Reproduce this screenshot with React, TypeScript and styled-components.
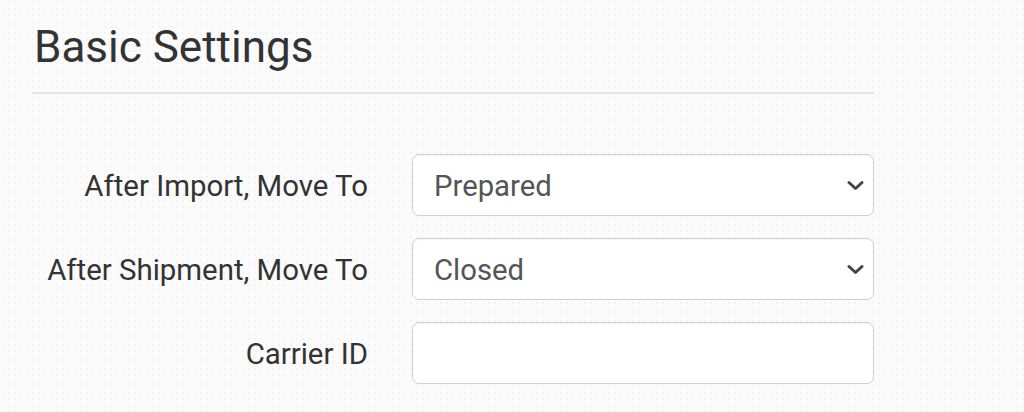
import * as React from 'react'
import styled, { createGlobalStyle } from 'styled-components'

const GlobalStyle = createGlobalStyle`
  html, body {
    margin: 0;
    padding: 0;
  }
  body {
    background-color: #fbfbfb;
    background-image: radial-gradient(circle, #f3f3f3 1.2px, transparent 1.4px);
    background-size: 6px 6px;
    font-family: Roboto, "Liberation Sans", sans-serif;
    color: #333;
  }
`

const Page = styled.div`
  width: 1024px;
  height: 412px;
  box-sizing: border-box;
  padding: 21px 150px 0 33px;
`

const Heading = styled.h2`
  margin: 0;
  padding: 0 0 19px 1px;
  font-size: 44px;
  font-weight: 400;
  line-height: 52px;
  color: #333;
  border-bottom: 2px solid #e3e3e3;
`

const Form = styled.form`
  display: grid;
  grid-template-columns: 335px 1fr;
  column-gap: 44px;
  row-gap: 22px;
  margin-top: 60px;
`

const Label = styled.label`
  justify-self: end;
  align-self: center;
  padding-top: 2px;
  font-size: 29.4px;
  color: #333;
`

const Field = styled.div`
  position: relative;
  height: 62px;
`

const Select = styled.select`
  appearance: none;
  width: 100%;
  height: 100%;
  box-sizing: border-box;
  border: 1.5px solid #cfcfcf;
  border-radius: 7px;
  background: #fff;
  padding: 2px 40px 0 21px;
  font-family: Roboto, "Liberation Sans", sans-serif;
  font-size: 29.3px;
  color: #555;
  box-shadow: inset 0 1px 1px rgba(0, 0, 0, 0.04);
`

const Input = styled.input`
  width: 100%;
  height: 100%;
  box-sizing: border-box;
  border: 1.5px solid #cfcfcf;
  border-radius: 7px;
  background: #fff;
  padding: 0 21px;
  font-family: Roboto, "Liberation Sans", sans-serif;
  font-size: 29.3px;
  color: #555;
  box-shadow: inset 0 1px 1px rgba(0, 0, 0, 0.04);
`

const Chevron = styled.svg`
  position: absolute;
  right: 10px;
  top: 50%;
  margin-top: -5px;
  width: 17px;
  height: 11px;
  pointer-events: none;
`

const Arrow = () => (
  <Chevron viewBox="0 0 17 11">
    <path d="M2 2.5l6.5 6 6.5-6" fill="none" stroke="#444" strokeWidth="3" strokeLinecap="round" strokeLinejoin="round" />
  </Chevron>
)

export default function App() {
  return (
    <Page>
      <GlobalStyle />
      <Heading>Basic Settings</Heading>
      <Form>
        <Label htmlFor="afterImport">After Import, Move To</Label>
        <Field>
          <Select id="afterImport" defaultValue="Prepared">
            <option>Prepared</option>
            <option>Closed</option>
          </Select>
          <Arrow />
        </Field>
        <Label htmlFor="afterShipment">After Shipment, Move To</Label>
        <Field>
          <Select id="afterShipment" defaultValue="Closed">
            <option>Prepared</option>
            <option>Closed</option>
          </Select>
          <Arrow />
        </Field>
        <Label htmlFor="carrierId">Carrier ID</Label>
        <Field>
          <Input id="carrierId" type="text" />
        </Field>
      </Form>
    </Page>
  )
}
